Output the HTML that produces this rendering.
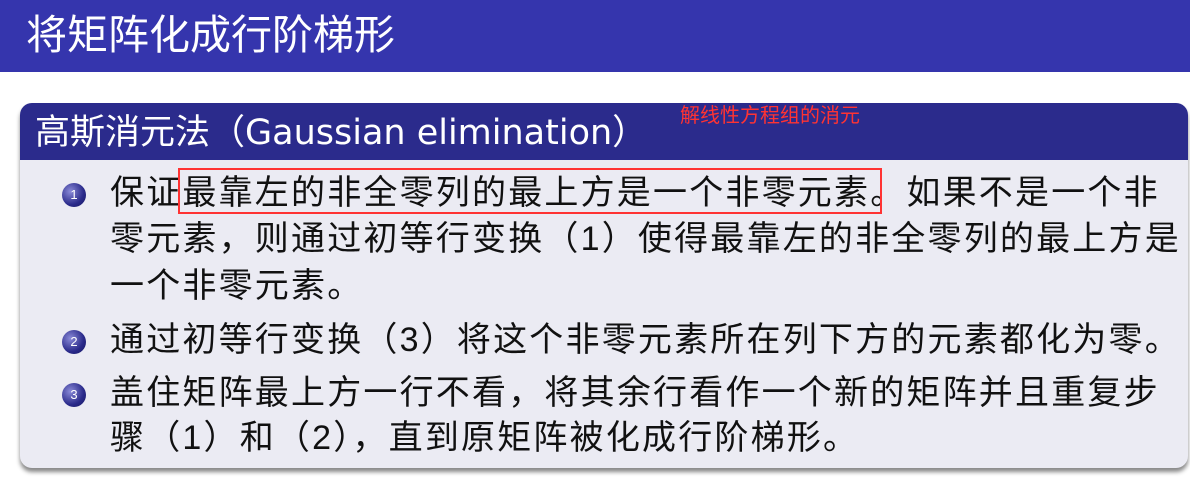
<!DOCTYPE html>
<html><head><meta charset="utf-8"><style>
body{margin:0;width:1190px;height:485px;background:#fff;overflow:hidden;position:relative;font-family:"Liberation Sans","Noto Sans CJK SC",sans-serif;}
.top{position:absolute;left:0;top:0;width:1190px;height:72px;background:#3535ad;}
.top span{position:absolute;left:26px;top:9px;font-size:41px;color:#fff;line-height:52px;}
.box{position:absolute;left:20px;top:103px;width:1168px;height:365px;background:#ebebf3;border-radius:12px;box-shadow:0 4px 4px #888;overflow:hidden;}
.hd{position:absolute;left:0;top:0;width:100%;height:57px;background:#2b2b8c;}
.hd span{position:absolute;left:15px;top:8px;font-size:35px;color:#fff;line-height:44px;font-family:"DejaVu Sans","Noto Sans CJK SC",sans-serif;}
.red{position:absolute;left:680px;top:103px;font-size:20px;color:#ff3333;line-height:26px;}
.t{position:absolute;left:110px;font-size:34px;line-height:46px;color:#111;white-space:nowrap;letter-spacing:2.2px;}
.b{position:absolute;left:62px;width:24px;height:24px;border-radius:50%;background:radial-gradient(circle at 35% 35%,#8a8ad8,#2a2a8a 60%,#151560);color:#fff;font-size:13px;line-height:24px;text-align:center;}
.rb{position:absolute;left:178px;top:168px;width:704px;height:46px;border:2px solid #ff3333;box-sizing:border-box;}
</style></head><body>
<div class="top"><span>将矩阵化成行阶梯形</span></div>
<div class="box"><div class="hd"><span>高斯消元法（Gaussian elimination）</span></div></div>
<div class="red">解线性方程组的消元</div>
<div class="b" style="top:183px">1</div>
<div class="t" style="top:170px">保证最靠左的非全零列的最上方是一个非零元素。如果不是一个非</div>
<div class="t" style="top:216px">零元素，则通过初等行变换（1）使得最靠左的非全零列的最上方是</div>
<div class="t" style="top:263px">一个非零元素。</div>
<div class="b" style="top:330px">2</div>
<div class="t" style="top:317px">通过初等行变换（3）将这个非零元素所在列下方的元素都化为零。</div>
<div class="b" style="top:383px">3</div>
<div class="t" style="top:370px">盖住矩阵最上方一行不看，将其余行看作一个新的矩阵并且重复步</div>
<div class="t" style="top:415px">骤（1）和（2），直到原矩阵被化成行阶梯形。</div>
<div class="rb"></div>
</body></html>
